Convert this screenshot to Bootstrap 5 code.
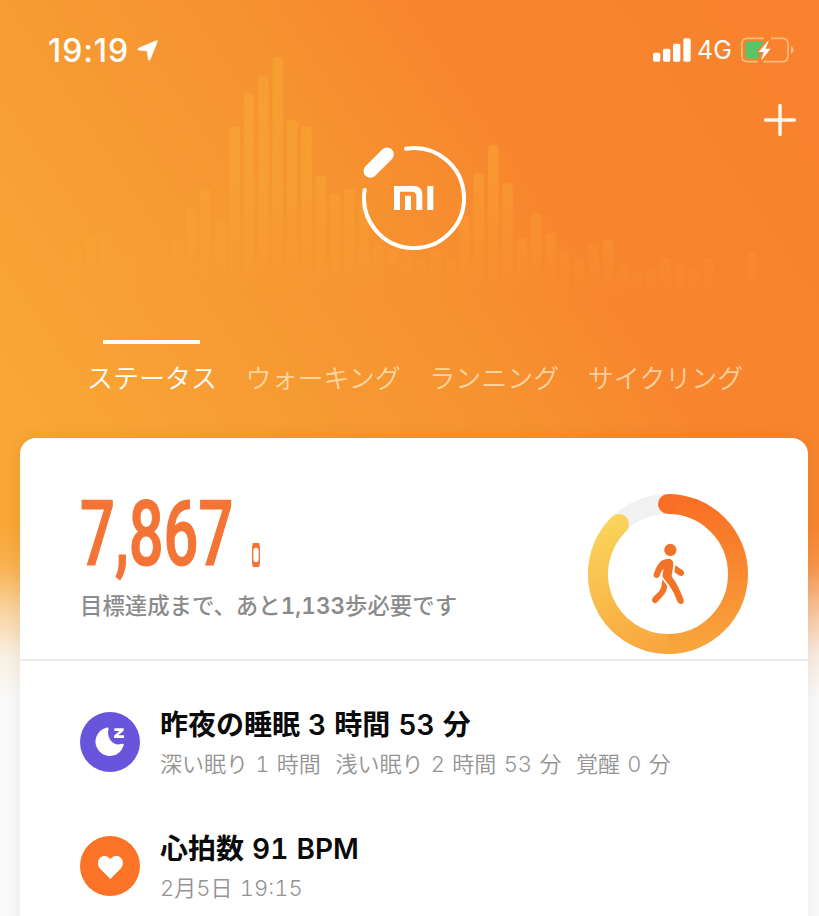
<!DOCTYPE html>
<html lang="ja">
<head>
<meta charset="utf-8">
<meta name="viewport" content="width=device-width, initial-scale=1">
<title>Mi Fit</title>
<link href="https://cdn.jsdelivr.net/npm/bootstrap@5.3.0/dist/css/bootstrap.min.css" rel="stylesheet">
<style>
body{font-family:Inter,"Noto Sans CJK JP",sans-serif;background:#fafafa;height:916px;overflow:hidden}
svg{display:block;flex:none}
.screen{height:916px;overflow:hidden;isolation:isolate}
.backdrop{inset:0;z-index:-1;background:linear-gradient(56deg,#f9a636 26%,#f79a32 45%,#f69330 58%,#f8862e 71%,#f8812d 100%);-webkit-mask-image:linear-gradient(#000 525px,rgba(0,0,0,.88) 565px,rgba(0,0,0,.45) 612px,rgba(0,0,0,.12) 655px,transparent 700px);mask-image:linear-gradient(#000 525px,rgba(0,0,0,.88) 565px,rgba(0,0,0,.45) 612px,rgba(0,0,0,.12) 655px,transparent 700px)}
.statusbar{height:100px;padding:0 25px 0 48px}
.clock{font-size:32px;font-weight:500;line-height:40px;width:89px;letter-spacing:.9px;padding-top:1px}
.network{font-size:25px;line-height:40px;width:42px;padding-left:6px}
.add-row{height:40px;padding:4px 23px 0 0}
.logo-row{padding:5px 0 0 362px;height:240px}
.mode-tabs{padding-left:87px;gap:28.500px;margin-top:-40px;height:98px}
.mode-tabs a{font-size:26px;line-height:40px;font-weight:350;color:rgba(255,236,200,.74);padding-top:19px}
.mode-tabs a.current{color:#fff;padding-top:0}
.mode-tabs a.current::before{content:"";display:block;width:97px;height:4px;background:#fff;margin:0 17px 15px 16px}
.panel{margin:0 11px 0 20px;border-radius:16px 16px 0 0;height:500px;box-shadow:0 0 18px rgba(0,0,0,.07)}
.goal{height:223px;padding:50px 60px 0 60px;border-bottom:2px solid #ebebeb}
.steps{font:500 91px/92px Roboto,sans-serif;color:#f37435;height:92px}
.steps span{display:inline-block;transform:scaleX(.675);transform-origin:0 50%;width:172px;white-space:nowrap;-webkit-text-stroke:1.2px #f37435}
.steps svg{margin-bottom:13px}
.goal-text{font-size:22.4px;line-height:30px;font-weight:500;color:#8b8b8b;margin-top:11px;white-space:nowrap;font-feature-settings:"tnum"}
.goal-text span{letter-spacing:.1px;font-weight:600}
.ring{margin-top:6px}
.entry{padding-left:60px;height:124px;gap:20px;white-space:nowrap;font-feature-settings:"tnum"}
.entry h2{font-size:28px;font-weight:600;line-height:36px;color:#0a0a0a;margin:-5px 0 6px;word-spacing:.6px}
.entry p{font-size:22px;line-height:30px;font-weight:350;color:#949494;margin:0;white-space:pre;word-spacing:1.4px}
.entries{padding-top:51px}
</style>
<script src="https://cdn.jsdelivr.net/npm/bootstrap@5.3.0/dist/js/bootstrap.bundle.min.js"></script>
</head>
<body>
<div class="screen position-relative">
  <div class="backdrop position-absolute">
    <svg id="wave" width="819" height="320" viewBox="0 0 819 320">
      <defs><linearGradient id="fade" gradientUnits="userSpaceOnUse" x1="0" y1="60" x2="0" y2="295"><stop offset="0" stop-color="#f9ab35" stop-opacity=".5"/><stop offset=".5" stop-color="#f9ab35" stop-opacity=".42"/><stop offset="1" stop-color="#f9ab35" stop-opacity="0"/></linearGradient></defs>
    </svg>
  </div>

  <header>
    <div class="statusbar d-flex align-items-center text-white">
      <span class="clock">19:19</span>
      <svg width="21" height="21" viewBox="0 0 21 21"><path d="M19.3.8Q20.700.4 20.200 1.800L13 19.500Q11.800 21.300 11.300 19.200L10.400 11L2 10.100Q-.2 9.400 1.500 8.200Z" fill="#fff" stroke="#fff" stroke-width=".8"/></svg>
      <svg class="ms-auto" width="38" height="24" viewBox="38 52 114 72" fill="#fff"><rect x="38" y="96" width="22" height="27" rx="5"/><rect x="68" y="84" width="22" height="39" rx="5"/><rect x="98" y="69" width="22" height="54" rx="5"/><rect x="129" y="53" width="22" height="70" rx="5"/></svg>
      <span class="network">4G</span>
      <svg class="ms-2" width="53" height="26" viewBox="303 49 159 78"><g fill="none" stroke="#fbbd7b" stroke-width="5"><path d="M371 53H322Q305.500 53 305.500 70V106Q305.500 123 322 123H353"/><path d="M393 53H427Q444 53 444 70V106Q444 123 427 123H370"/></g><path d="M453 75Q461 80 461 88T453 101Z" fill="#fbbd7b"/><path d="M326 62H374L348 96H362L355 114H326Q316 114 316 104V72Q316 62 326 62Z" fill="#5ac466"/><path d="M387 57L356 94H371L363 120L392 84H377Z" fill="#fff"/></svg>
    </div>
    <div class="add-row d-flex justify-content-end">
      <svg width="32" height="32" viewBox="0 0 32 32"><path d="M16 1.500V30.500M1.500 16H30.500" stroke="#fff8ee" stroke-width="3.400" stroke-linecap="round"/></svg>
    </div>
    <div class="logo-row">
      <svg width="105" height="106" viewBox="66 45 315 318"><g fill="none" stroke="#fff" stroke-linecap="round"><path d="M198 56A150 150 0 1 1 74 180" stroke-width="12"/><path d="M91 123L141 73" stroke-width="41"/></g><path d="M162 168H221Q247 168 247 194V240H229V199Q229 185 215 185H180V240H162ZM195 197H213V240H195ZM262 168H280V240H262Z" fill="#fff"/></svg>
    </div>
    <nav class="mode-tabs d-flex align-items-start">
      <a class="current text-decoration-none" href="#">ステータス</a>
      <a class="text-decoration-none" href="#">ウォーキング</a>
      <a class="text-decoration-none" href="#">ランニング</a>
      <a class="text-decoration-none" href="#">サイクリング</a>
    </nav>
  </header>

  <main class="panel bg-white">
    <section class="goal d-flex justify-content-between">
      <div>
        <div class="steps d-flex">
          <span>7,867</span>
          <svg class="mt-auto" width="8" height="24" viewBox="0 0 8 24"><path fill-rule="evenodd" d="M.8 0H7.200L8 4V20L7.200 24H.8L0 20V4ZM4 4.800C2.500 4.800 1.300 6 1.300 8V16C1.300 18 2.500 19.200 4 19.200S6.700 18 6.700 16V8C6.700 6 5.500 4.800 4 4.800Z" fill="#f37435"/></svg>
        </div>
        <div class="goal-text">目標達成まで、あと<span>1,133</span>歩必要です</div>
      </div>
      <svg class="ring" width="160" height="160" viewBox="54 42 480 480">
        <defs>
          <linearGradient id="warm" gradientUnits="userSpaceOnUse" x1="0" y1="60" x2="0" y2="500"><stop stop-color="#f96f25"/><stop offset="1" stop-color="#f8a53c"/></linearGradient>
          <linearGradient id="gold" gradientUnits="userSpaceOnUse" x1="130" y1="110" x2="294" y2="510"><stop stop-color="#fad45b"/><stop offset="1" stop-color="#f8a53c"/></linearGradient>
        </defs>
        <g fill="none" stroke-width="60">
          <circle cx="294" cy="282" r="210" stroke="#f1f1f1"/>
          <path d="M295 492A210 210 0 0 1 147 132" stroke="url(#gold)" stroke-linecap="round"/>
          <path d="M294 72A210 210 0 0 1 294 492" stroke="url(#warm)"/>
        </g>
        <circle cx="294" cy="72" r="30" fill="#f96f25"/>
        <g fill="#f27228"><circle cx="301" cy="210" r="18.500"/>
          <path d="M273 244Q282 236 298 236Q311 238 310 255L305 288Q310 298 317 307Q327 324 341 359Q343 370 334 372Q326 374 322 364Q312 337 299 318L280 294Q276 289 278 282L281 266L277 270Q272 278 269 288Q263 297 254 292Q249 289 252 280Q260 255 273 244Z"/>
          <path d="M316 256L338 271Q346 278 340 285Q335 291 326 286L313 276Z"/>
          <path d="M277 298L292 318Q290 334 283 343L262 366Q255 373 248 366Q243 359 249 352L268 333Q274 325 275 315Z"/></g>
      </svg>
    </section>
    <section class="entries">
      <div class="entry d-flex align-items-start">
        <svg width="60" height="60" viewBox="60 66 180 180"><circle cx="150" cy="156" r="90" fill="#6955dc"/><path d="M139 113C146 112 146 115 145 121C140 147 162 169 183 162C190 160 193 160 190 169A43 43 0 1 1 139 113Z" fill="#fff"/><path d="M163 115H191V122L175 136H192V144H162V137L178 123H163Z" fill="#fff"/></svg>
        <div><h2>昨夜の睡眠 3 時間 53 分</h2><p>深い眠り 1 時間&nbsp; 浅い眠り 2 時間 53 分&nbsp; 覚醒 0 分</p></div>
      </div>
      <div class="entry d-flex align-items-start">
        <svg width="60" height="60" viewBox="60 438 180 180"><circle cx="150" cy="528" r="90" fill="#fa7327"/><path d="M151 567L119 535C109 522 114 501 130 498Q143 496 151 507Q159 496 173 498C189 502 194 522 183 535Z" fill="#fff"/></svg>
        <div><h2>心拍数 91 BPM</h2><p>2月5日 19:15</p></div>
      </div>
    </section>
  </main>
</div>
<script>
// Top edge of every bar in the activity waveform, left to right
const tops=[246,234,234,252,252,262,240,238,208,189,219,126,94,76,57,120,126,175,194,189,203,245,250,258,258,250,258,216,173,145,183,238,214,233,252,258,245,239,264,270,269,258,264,269,258,285,277,252];
const wave=document.getElementById('wave');
tops.forEach((y,i)=>{
  const bar=document.createElementNS('http://www.w3.org/2000/svg','rect');
  const attrs={x:71.3+i*14.37,y,width:10.4,height:305-y,rx:4,fill:'url(#fade)'};
  for(const k in attrs) bar.setAttribute(k,attrs[k]);
  wave.appendChild(bar);
});
</script>
</body>
</html>
